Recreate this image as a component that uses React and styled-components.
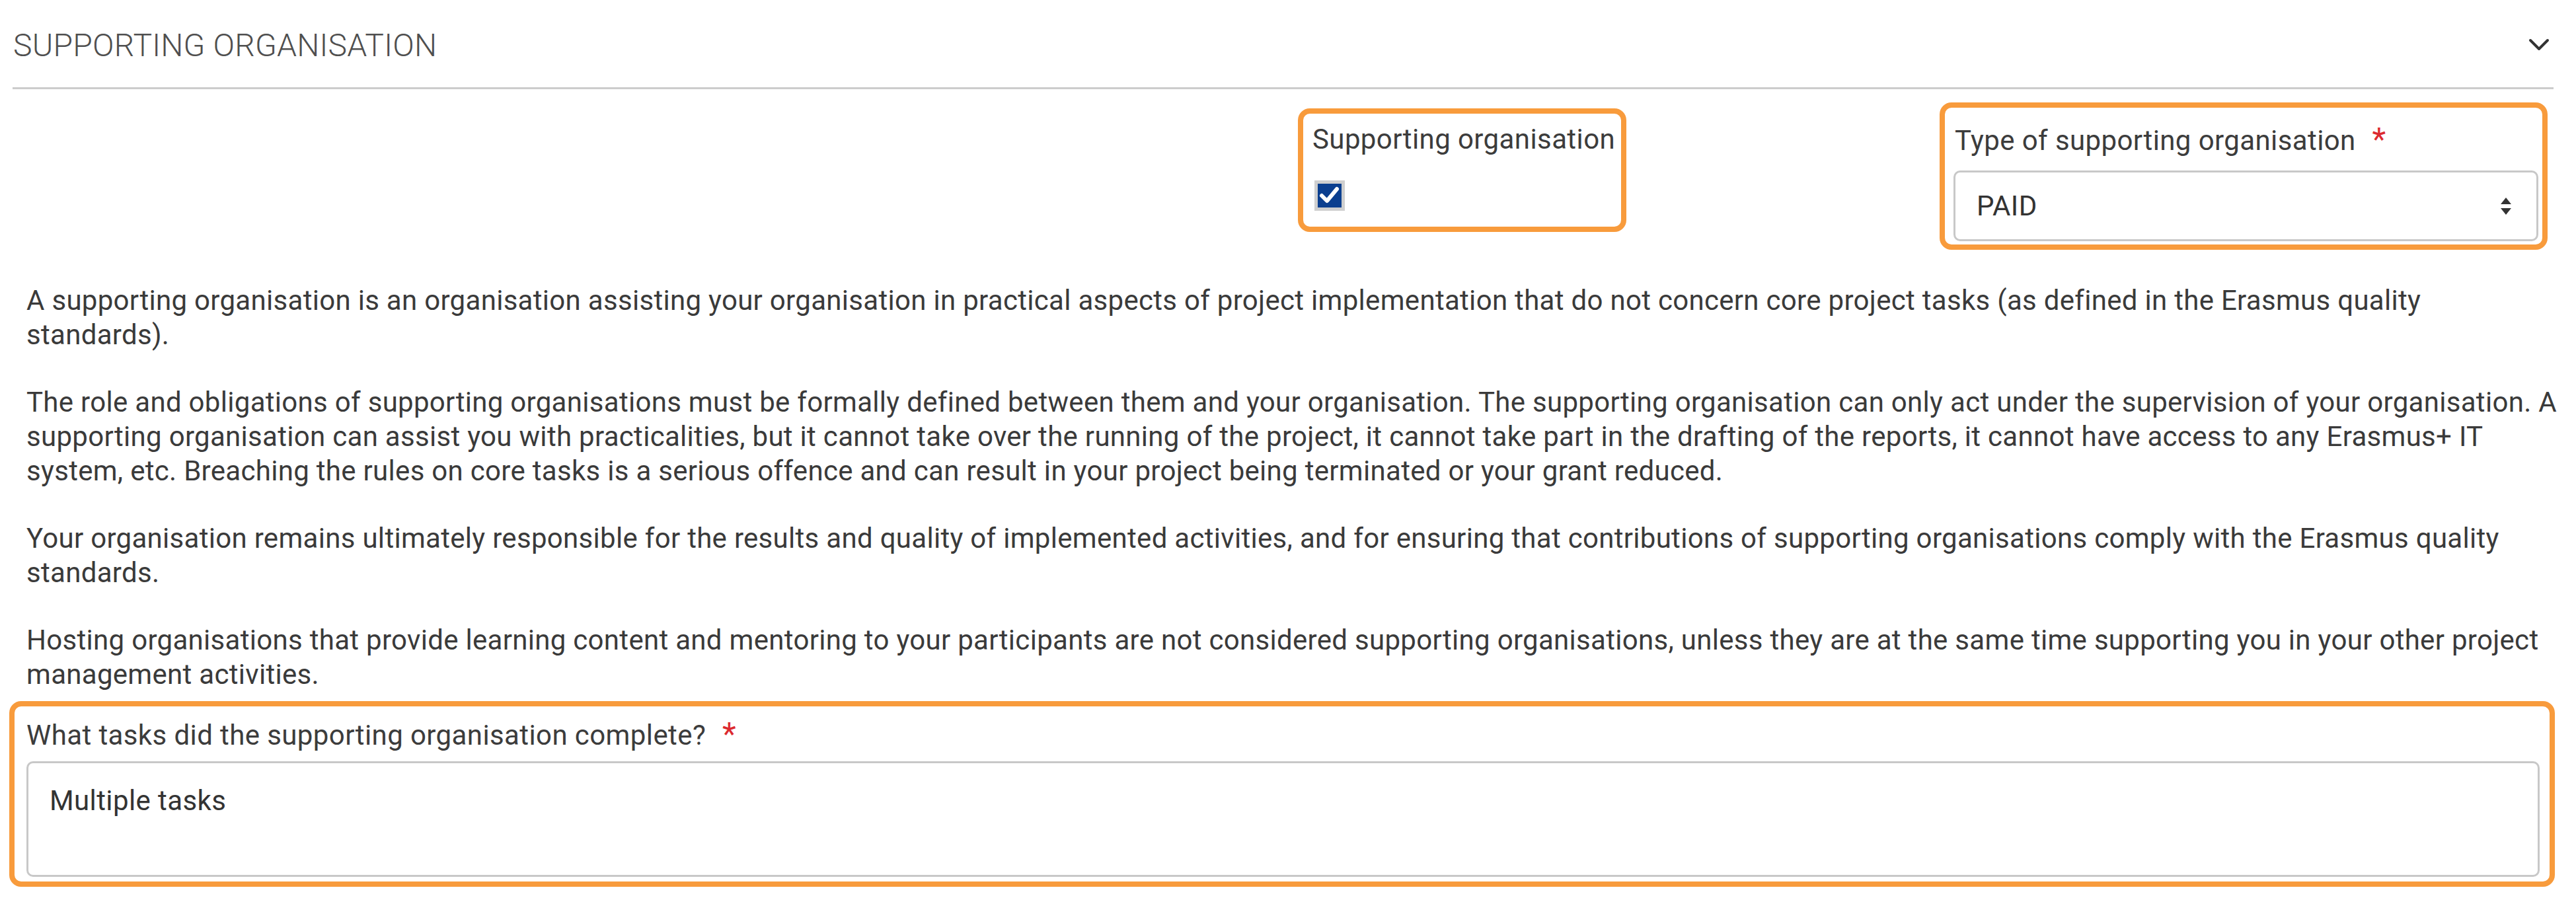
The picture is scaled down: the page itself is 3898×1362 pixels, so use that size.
import React from "react"
import styled, { createGlobalStyle } from "styled-components"

const GlobalStyle = createGlobalStyle`
  * {
    box-sizing: border-box;
  }

  body {
    margin: 0;
    background: #ffffff;
    font-family: "Roboto", "Liberation Sans", sans-serif;
    color: #3a3a3a;
    overflow-x: hidden;
  }
`

const ORANGE = "#f89b3c"

// measure = optional max line width, the first block wraps a bit earlier
const paragraphs = [
  {
    measure: 3780,
    text: "A supporting organisation is an organisation assisting your organisation in practical aspects of project implementation that do not concern core project tasks (as defined in the Erasmus quality standards).",
  },
  {
    text: "The role and obligations of supporting organisations must be formally defined between them and your organisation. The supporting organisation can only act under the supervision of your organisation. A supporting organisation can assist you with practicalities, but it cannot take over the running of the project, it cannot take part in the drafting of the reports, it cannot have access to any Erasmus+ IT system, etc. Breaching the rules on core tasks is a serious offence and can result in your project being terminated or your grant reduced.",
  },
  {
    text: "Your organisation remains ultimately responsible for the results and quality of implemented activities, and for ensuring that contributions of supporting organisations comply with the Erasmus quality standards.",
  },
  {
    text: "Hosting organisations that provide learning content and mentoring to your participants are not considered supporting organisations, unless they are at the same time supporting you in your other project management activities.",
  },
]

const Chevron = () => (
  <svg width="32" height="20" viewBox="0 0 32 20">
    <polyline
      points="3,3 16,16 29,3"
      fill="none"
      stroke="#333"
      strokeWidth="4"
      strokeLinecap="round"
      strokeLinejoin="round"
    />
  </svg>
)

const CheckMark = () => (
  <svg width="46" height="46" viewBox="0 0 46 46">
    <rect x="0" y="0" width="46" height="46" fill="#cfcfcf" />
    <rect x="5" y="5" width="36" height="36" fill="#0b3f8f" />
    <polyline
      points="11,23 19,31 34,13"
      fill="none"
      stroke="#ffffff"
      strokeWidth="6"
      strokeLinecap="round"
      strokeLinejoin="round"
    />
  </svg>
)

const SortArrows = () => (
  <svg width="20" height="30" viewBox="0 0 20 30">
    <polygon points="10,2 18,12 2,12" fill="#333" />
    <polygon points="2,18 18,18 10,28" fill="#333" />
  </svg>
)

const App = () => {
  return (
    <>
      <GlobalStyle />
      <StyledPage>
        <StyledHeader>
          <h2 className="section-title">SUPPORTING ORGANISATION</h2>
          <Chevron />
        </StyledHeader>

        <StyledFieldRow>
          <StyledHighlight className="checkbox-field">
            <StyledLabel>Supporting organisation</StyledLabel>
            <CheckMark />
          </StyledHighlight>

          <StyledHighlight className="select-field">
            <StyledLabel className="indented">
              Type of supporting organisation <StyledRequired>*</StyledRequired>
            </StyledLabel>
            <StyledSelect>
              <span>PAID</span>
              <SortArrows />
            </StyledSelect>
          </StyledHighlight>
        </StyledFieldRow>

        <StyledInfo>
          {paragraphs.map((p, i) => (
            <StyledParagraph key={i} $measure={p.measure}>
              {p.text}
            </StyledParagraph>
          ))}
        </StyledInfo>

        <StyledHighlight className="textarea-field">
          <StyledLabel>
            What tasks did the supporting organisation complete? <StyledRequired>*</StyledRequired>
          </StyledLabel>
          <StyledTextArea>Multiple tasks</StyledTextArea>
        </StyledHighlight>
      </StyledPage>
    </>
  )
}

const StyledPage = styled.div`
  width: 3898px;
  padding: 0 34px 20px 19px;
`

const StyledHeader = styled.div`
  display: flex;
  align-items: center;
  justify-content: space-between;
  height: 135px;
  padding: 4px 6px 0 1px;
  border-bottom: 3px solid #cccccc;

  .section-title {
    margin: 0;
    font-size: 48px;
    font-weight: 300;
    color: #4f4f4f;
    letter-spacing: 0.2px;
  }
`

const StyledFieldRow = styled.div`
  display: flex;
  justify-content: flex-end;
  align-items: flex-start;
  gap: 474px;
  margin-top: 20px;
  padding-right: 9px;
`

const StyledHighlight = styled.div`
  border: 8px solid ${ORANGE};
  border-radius: 18px;
  display: flex;
  flex-direction: column;

  svg {
    flex-shrink: 0;
  }

  &.checkbox-field {
    width: 497px;
    height: 187px;
    margin-top: 9px;
    padding: 14px 14px 0;

    svg {
      margin-top: 37px;
      margin-left: 3px;
    }
  }

  &.select-field {
    width: 920px;
    height: 223px;
    padding: 23px 6px 0 13px;
  }

  &.textarea-field {
    width: 3852px;
    height: 281px;
    margin-left: -5px;
    padding: 17px 15px 0 18px;
  }
`

const StyledLabel = styled.label`
  display: block;
  font-size: 42px;
  line-height: 50px;
  letter-spacing: 0.4px;
  white-space: nowrap;
  color: #3c3c3c;

  &.indented {
    padding-left: 2px;
  }
`

const StyledRequired = styled.span`
  color: #dc2a2f;
  font-size: 48px;
  margin-left: 14px;
`

const StyledSelect = styled.div`
  display: flex;
  align-items: center;
  justify-content: space-between;
  height: 107px;
  margin-top: 20px;
  padding: 0 36px 0 32px;
  border: 3px solid #c8c8c8;
  border-radius: 10px;
  font-size: 42px;
  letter-spacing: 0.4px;
  color: #333333;
`

const StyledInfo = styled.div`
  margin: 51px -41px 14px 21px;
`

const StyledParagraph = styled.p`
  margin: 0 0 50px;
  max-width: ${({ $measure }) => ($measure ? `${$measure}px` : "none")};
  font-size: 42px;
  line-height: 52px;
  letter-spacing: 0.3px;
  color: #3a3a3a;

  &:last-child {
    margin-bottom: 0;
  }
`

const StyledTextArea = styled.div`
  height: 175px;
  margin-top: 14px;
  padding: 31px 32px;
  border: 3px solid #c8c8c8;
  border-radius: 10px;
  font-size: 42px;
  line-height: 52px;
  letter-spacing: 0.4px;
  color: #333333;
`

export default App
